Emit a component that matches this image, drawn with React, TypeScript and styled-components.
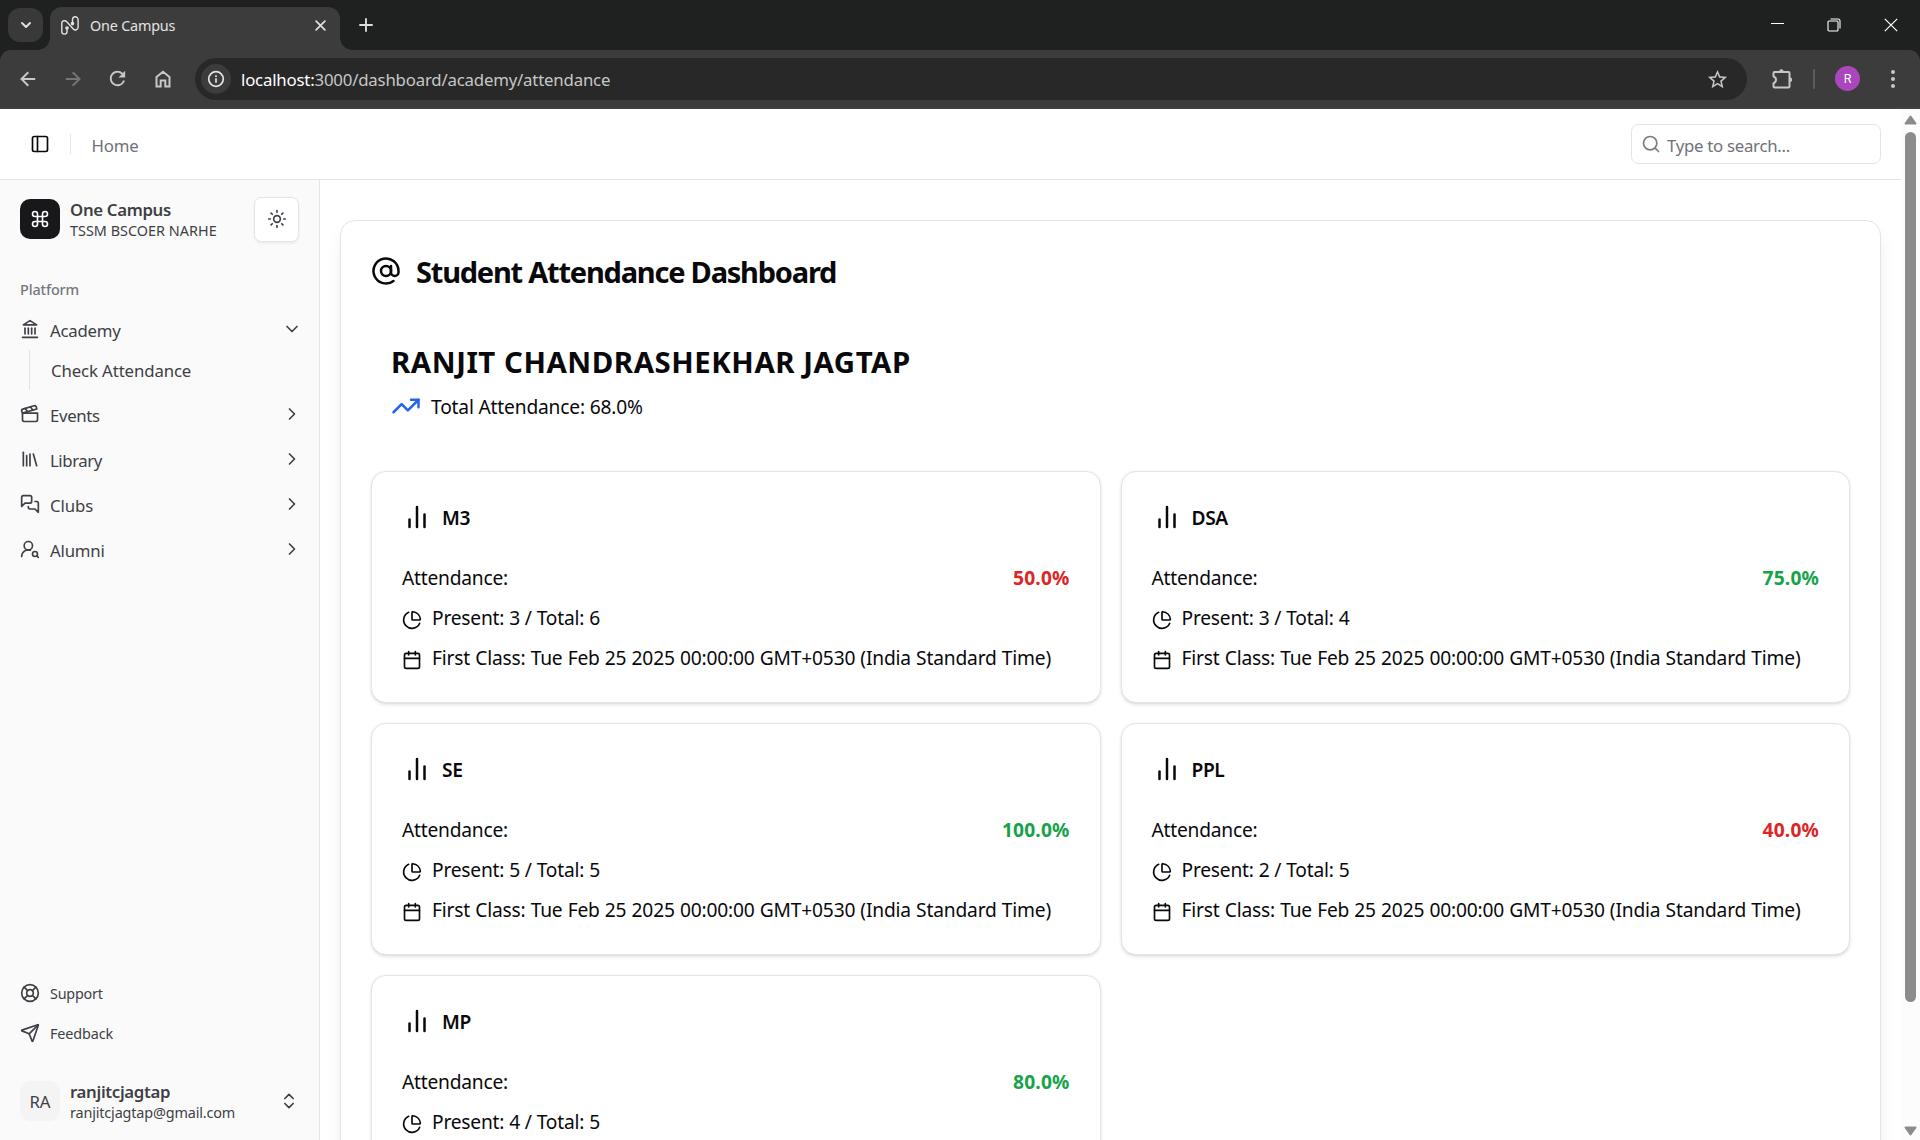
import React from "react";
import styled, { createGlobalStyle, css } from "styled-components";
import {
  AtSign,
  Calendar,
  ChartPie,
  ChevronDown,
  ChevronRight,
  ChevronsUpDown,
  Clapperboard,
  Command,
  Library,
  LifeBuoy,
  PanelLeft,
  Search,
  Send,
  Sun,
  TrendingUp,
  UserRoundSearch,
} from "lucide-react";
import { MdRefresh, MdStarBorder } from "react-icons/md";

const GlobalStyle = createGlobalStyle`
  *, *::before, *::after { box-sizing: border-box; }
  body {
    margin: 0;
    overflow: hidden;
    font-family: "Noto Sans", "Open Sans", sans-serif;
    color: #09090b;
    background: #fff;
  }
  svg { display: block; flex: none; }
`;

const border = "#e4e4e7";
const chromeDark = "#1f2120";
const chromeMid = "#3c3c3c";

/* ---------- browser window ---------- */

const Window = styled.div`
  width: 1920px;
  height: 1140px;
  display: flex;
  flex-direction: column;
  overflow: hidden;
`;

const TabStrip = styled.div`
  height: 50px;
  flex: none;
  display: flex;
  align-items: flex-start;
  padding: 0 0 0 8px;
  background: ${chromeDark};
  color: #dedede;
`;

const TabMenu = styled.div`
  width: 35px;
  height: 34px;
  margin: 8px 7px 0 0;
  border-radius: 12px;
  background: #383938;
  display: grid;
  place-items: center;
`;

const Tab = styled.div`
  position: relative;
  width: 290px;
  height: 43px;
  margin-top: 7px;
  padding: 0 12px 7px 11px;
  display: flex;
  align-items: center;
  border-radius: 12px 12px 0 0;
  background: ${chromeMid};

  &::before,
  &::after {
    content: "";
    position: absolute;
    bottom: 0;
    width: 12px;
    height: 12px;
  }
  &::before {
    left: -12px;
    background: radial-gradient(circle at 0 0, transparent 11.5px, ${chromeMid} 12px);
  }
  &::after {
    right: -12px;
    background: radial-gradient(circle at 100% 0, transparent 11.5px, ${chromeMid} 12px);
  }
`;

const TabTitle = styled.span`
  flex: 1;
  margin-left: 11px;
  padding-top: 1px;
  font-size: 14.4px;
  line-height: 20px;
  letter-spacing: -0.21px;
  color: #e3e3e3;
`;

const NewTab = styled.div`
  width: 30px;
  height: 50px;
  margin-left: 11px;
  display: grid;
  place-items: center;
`;

const WindowButtons = styled.div`
  margin-left: auto;
  display: flex;
  height: 50px;
`;

const WindowButton = styled.div<{ $w?: number }>`
  width: ${(p) => p.$w ?? 57}px;
  height: 49px;
  display: grid;
  place-items: center;
`;

const ToolbarBack = styled.div`
  flex: none;
  height: 59px;
  background: ${chromeDark};
`;

const Toolbar = styled.div`
  height: 59px;
  display: flex;
  align-items: center;
  padding: 0 0 1px 5px;
  border-radius: 11px 11px 0 0;
  background: ${chromeMid};
  box-shadow: inset 0 -2px 0 #414141;
  color: #c7c7c7;
`;

const ToolButton = styled.div<{ $dim?: boolean; $w?: number }>`
  width: ${(p) => p.$w ?? 45}px;
  flex: none;
  display: grid;
  place-items: center;
  padding-bottom: 1px;
  color: ${(p) => (p.$dim ? "#757575" : "#c7c7c7")};
`;

const AddressBar = styled.div`
  width: 1552px;
  flex: none;
  height: 42px;
  margin-left: 10px;
  padding: 0 18px 0 6px;
  display: flex;
  align-items: center;
  border-radius: 21px;
  background: #282828;
`;

const SiteInfo = styled.div`
  width: 30px;
  height: 30px;
  border-radius: 50%;
  background: ${chromeMid};
  display: grid;
  place-items: center;
  color: #e3e3e3;
`;

const Url = styled.span`
  flex: 1;
  padding: 2px 0 0 10px;
  font-size: 16.8px;
  line-height: 26px;
  letter-spacing: -0.19px;
  color: #c7c7c7;
  b {
    font-weight: 400;
    color: #fff;
  }
`;

const Divider = styled.span`
  width: 2px;
  height: 20px;
  margin: 0 20px 0 -3px;
  border-radius: 1px;
  background: #5c5c5c;
`;

const Profile = styled.div`
  width: 25px;
  height: 25px;
  margin: 0 auto 1px 0;
  border-radius: 50%;
  background: #ab47bc;
  color: #fff;
  font: 400 12.5px/25px Roboto, sans-serif;
  text-align: center;
`;

/* ---------- page ---------- */

const Viewport = styled.div`
  flex: 1;
  min-height: 0;
  display: flex;
`;

const Page = styled.div`
  width: 1901px;
  display: flex;
  flex-direction: column;
  overflow: hidden;
`;

const ScrollBar = styled.div`
  width: 19px;
  display: flex;
  flex-direction: column;
  align-items: center;
  padding: 6px 2px 4px 2px;
  background: #fcfcfc;
  color: #8b8b8b;
`;

const Thumb = styled.div`
  width: 11px;
  height: 870px;
  margin: 7px 0 auto;
  border-radius: 6px;
  background: #8b8b8b;
`;

const Header = styled.header`
  flex: none;
  height: 71px;
  display: flex;
  align-items: center;
  padding: 0 20px 0 30px;
  border-bottom: 1px solid ${border};
`;

const HeaderRule = styled.span`
  width: 1px;
  height: 20px;
  margin: 0 20.5px 0 20px;
  background: ${border};
`;

const Crumb = styled.span`
  padding-top: 3px;
  font-size: 16.8px;
  line-height: 24px;
  letter-spacing: -0.2px;
  color: #71717a;
`;

const SearchBox = styled.div`
  width: 250px;
  height: 40px;
  margin-left: auto;
  padding-left: 9px;
  display: flex;
  align-items: center;
  gap: 6px;
  border: 1px solid ${border};
  border-radius: 7.5px;
  color: #7b7b80;
  font-size: 16.8px;
  line-height: 24px;
  letter-spacing: -0.28px;
  span {
    padding-top: 3px;
    color: #71717a;
  }
`;

const Body = styled.div`
  flex: 1;
  min-height: 0;
  display: flex;
`;

const Sidebar = styled.aside`
  width: 320px;
  flex: none;
  display: flex;
  flex-direction: column;
  padding: 17px 20px 17px;
  border-right: 1px solid ${border};
  background: #fafafa;
  color: #3f3f46;
`;

const Identity = styled.div`
  display: flex;
  align-items: center;
  height: 44px;
`;

const Badge = styled.div<{ $dark?: boolean }>`
  width: 40px;
  height: 40px;
  border-radius: 10px;
  display: grid;
  place-items: center;
  font-size: 16.8px;
  line-height: 24px;
  ${(p) =>
    p.$dark
      ? css`
          background: #18181b;
          color: #fafafa;
        `
      : css`
          background: #f4f4f5;
          padding-top: 1px;
        `}
`;

const IdentityText = styled.div`
  flex: 1;
  display: flex;
  flex-direction: column;
  padding: 4px 0 0 10px;
`;

const IdentityName = styled.span`
  font-size: 16.8px;
  font-weight: 600;
  line-height: 20px;
  letter-spacing: -0.33px;
`;

const IdentityNote = styled.span<{ $ls: number }>`
  font-size: 14.4px;
  line-height: 22px;
  letter-spacing: ${(p) => p.$ls}px;
`;

const ThemeButton = styled.div`
  width: 45px;
  height: 45px;
  display: grid;
  place-items: center;
  border: 1px solid ${border};
  border-radius: 7.5px;
  background: #fff;
  box-shadow: 0 1.25px 2.5px rgba(0, 0, 0, 0.05);
`;

const GroupLabel = styled.div`
  height: 39px;
  margin: 28px 0 2px;
  padding-top: 1px;
  font-size: 14.4px;
  font-weight: 500;
  line-height: 39px;
  letter-spacing: -0.13px;
  color: #77777b;
`;

const Menu = styled.nav`
  display: flex;
  flex-direction: column;
  gap: 5px;
`;

const MenuRow = styled.div`
  height: 40px;
  display: flex;
  align-items: center;
  gap: 10px;
  padding-bottom: 2px;
`;

const MenuText = styled.span<{ $ls: number }>`
  flex: 1;
  padding-top: 3px;
  font-size: 16.8px;
  line-height: 24px;
  letter-spacing: ${(p) => p.$ls}px;
`;

const ChevronSlot = styled.span`
  margin-right: -3px;
`;

const SubMenu = styled.div`
  height: 40px;
  margin: -5px 0 0 9px;
  padding: 0 0 0 21px;
  border-left: 1.25px solid ${border};
  font-size: 16.8px;
  line-height: 41px;
  letter-spacing: -0.12px;
`;

const FooterLinks = styled.div`
  margin-top: auto;
  margin-bottom: 26px;
`;

const FooterLink = styled.div<{ $ls: number }>`
  height: 40px;
  display: flex;
  align-items: center;
  gap: 10px;
  font-size: 14.4px;
  line-height: 20px;
  letter-spacing: ${(p) => p.$ls}px;
  span {
    padding-top: 2px;
  }
`;

const Main = styled.main`
  flex: 1;
  min-width: 0;
  padding: 40px 20px 0;
`;

const Panel = styled.section`
  height: 1100px;
  padding: 30px;
  border: 1px solid ${border};
  border-radius: 15px;
  box-shadow: 0 12.5px 19px -4px rgba(0, 0, 0, 0.1), 0 5px 7.5px -5px rgba(0, 0, 0, 0.1);
`;

const PanelTitle = styled.h1`
  height: 40px;
  margin: 0 0 30px;
  display: flex;
  align-items: center;
  gap: 15px;
  font-size: 29px;
  font-weight: 700;
  line-height: 40px;
  letter-spacing: -1.22px;
  span {
    padding-top: 2px;
  }
`;

const Summary = styled.div`
  padding: 20px;
  margin-bottom: 30px;
`;

const StudentName = styled.h2`
  height: 40px;
  margin: 0 0 10px;
  padding-top: 1px;
  font-size: 29.4px;
  font-weight: 700;
  line-height: 40px;
  letter-spacing: 0.54px;
`;

const TotalRow = styled.div`
  height: 30px;
  display: flex;
  align-items: center;
  gap: 10px;
  font-size: 19.2px;
  line-height: 30px;
  letter-spacing: -0.18px;
  span {
    padding-top: 2px;
  }
`;

const Grid = styled.div`
  display: grid;
  grid-template-columns: 1fr 1fr;
  gap: 20px;
`;

const Card = styled.article`
  height: 232px;
  padding: 30px;
  border: 1px solid ${border};
  border-radius: 15px;
  background: #fff;
  box-shadow: 0 1.25px 3.75px rgba(0, 0, 0, 0.1), 0 1.25px 2.5px -1.25px rgba(0, 0, 0, 0.1);
`;

const CardTitle = styled.h3`
  height: 30px;
  margin: 0 0 30px;
  display: flex;
  align-items: center;
  gap: 10px;
  font-size: 19.2px;
  font-weight: 600;
  line-height: 30px;
  letter-spacing: -0.4px;
  span {
    padding-top: 2px;
  }
`;

const Line = styled.div<{ $ls?: number; $ws?: number }>`
  height: 30px;
  margin-bottom: 10px;
  display: flex;
  align-items: center;
  font-size: 19.2px;
  line-height: 30px;
  letter-spacing: ${(p) => p.$ls ?? -0.22}px;
  word-spacing: ${(p) => p.$ws ?? 0}px;
  white-space: nowrap;
  span {
    padding-top: 2px;
  }
  svg {
    margin: 6px 10px 0 0;
  }
`;

const Percent = styled.strong<{ $good: boolean }>`
  margin-left: auto;
  padding-top: 2px;
  letter-spacing: 0.16px;
  color: ${(p) => (p.$good ? "#16a34a" : "#dc2626")};
`;

/* ---------- drawings ---------- */

const Stroke = ({ size = 20, d, w = 2 }: { size?: number; d: string[]; w?: number }) => (
  <svg
    width={size}
    height={size}
    viewBox="0 0 24 24"
    fill="none"
    stroke="currentColor"
    strokeWidth={w}
    strokeLinecap="round"
    strokeLinejoin="round"
  >
    {d.map((p) => (
      <path key={p} d={p} />
    ))}
  </svg>
);

const Bars = () => <Stroke size={30} d={["M18 20V10", "M12 20V4", "M6 20v-6"]} />;
const Landmark = () => (
  <Stroke d={["M3 22h18", "M6 18v-7", "M10 18v-7", "M14 18v-7", "M18 18v-7", "m12 2 8 5H4Z"]} />
);
const Chats = () => (
  <Stroke
    d={[
      "M14 9a2 2 0 0 1-2 2H6l-4 4V4a2 2 0 0 1 2-2h8a2 2 0 0 1 2 2z",
      "M18 9h2a2 2 0 0 1 2 2v11l-4-4h-6a2 2 0 0 1-2-2v-1",
    ]}
  />
);

const Favicon = () => (
  <svg width="18" height="19" viewBox="0 0 18 19" fill="none" stroke="#e3e3e3" strokeWidth="1.4">
    <path d="M6 12v3.5a2.6 2.6 0 0 1-5.2 0V7C.8 4.5 4.3 4 6 6l6.3 7c1.6 1.7 4.8 1 4.8-1.8V3.6a2.8 2.8 0 0 0-5.6 0V7.5" />
    <circle cx="6" cy="12" r="1.1" fill="#e3e3e3" />
    <circle cx="11.5" cy="7.6" r="1.1" fill="#e3e3e3" />
  </svg>
);

const Arrow = ({ flip }: { flip?: boolean }) => (
  <svg width="20" height="20" viewBox="0 0 20 20" fill="none" stroke="currentColor" strokeWidth="2">
    <path d={flip ? "M2.8 10h13.6M9.7 3.2 16.5 10l-6.8 6.8" : "M17.2 10H3.6M10.3 3.2 3.5 10l6.8 6.8"} />
  </svg>
);

const House = () => (
  <svg width="20" height="20" viewBox="0 0 20 20" fill="none" stroke="currentColor" strokeWidth="2">
    <path d="M3.5 8 10 2.7 16.5 8v9.5h-4.2v-6H7.7v6H3.5z" />
  </svg>
);

const Info = () => (
  <svg width="18" height="18" viewBox="0 0 18 18" fill="none" stroke="currentColor" strokeWidth="1.7">
    <circle cx="9" cy="9" r="7.3" />
    <path d="M9 8.2v4.6M9 5.2v1.8" />
  </svg>
);

const Puzzle = () => (
  <svg width="22" height="22" viewBox="0 0 22 22" fill="none" stroke="currentColor" strokeWidth="2" strokeLinejoin="round">
    <path d="M3.5 4H17.5a1 1 0 0 1 1 1V18.5a1 1 0 0 1-1 1H3.5a1 1 0 0 1-1-1V15.2a3.5 3.5 0 0 0 0-6.7V5a1 1 0 0 1 1-1z" />
    <path d="M8.2 3.5a2.2 2.2 0 0 1 4.4 0zM19 9.6a2.2 2.2 0 0 1 0 4.4z" fill="currentColor" stroke="none" />
  </svg>
);

const Dots = () => (
  <svg width="6" height="20" viewBox="0 0 6 20" fill="currentColor">
    <circle cx="3" cy="3" r="2" />
    <circle cx="3" cy="10" r="2" />
    <circle cx="3" cy="17" r="2" />
  </svg>
);

const Triangle = ({ down }: { down?: boolean }) => (
  <svg width="13" height="10" viewBox="0 0 13 10" fill="currentColor" stroke="currentColor" strokeLinejoin="round" strokeWidth="2">
    <path d={down ? "M1.5 1.5h10L6.5 8.5z" : "M1.5 8.5h10L6.5 1.5z"} />
  </svg>
);

/* ---------- data ---------- */

const menu = [
  { label: "Academy", icon: <Landmark />, ls: -0.24, open: true },
  { label: "Events", icon: <Clapperboard size={20} />, ls: -0.35 },
  { label: "Library", icon: <Library size={20} />, ls: -0.42 },
  { label: "Clubs", icon: <Chats />, ls: -0.1 },
  { label: "Alumni", icon: <UserRoundSearch size={20} />, ls: -0.2 },
];

const start = "Tue Feb 25 2025 00:00:00 GMT+0530 (India Standard Time)";

const subjects = [
  { name: "M3", percent: 50, present: 3, total: 6, first: start },
  { name: "DSA", percent: 75, present: 3, total: 4, first: start },
  { name: "SE", percent: 100, present: 5, total: 5, first: start },
  { name: "PPL", percent: 40, present: 2, total: 5, first: start },
  { name: "MP", percent: 80, present: 4, total: 5 },
];

const Browser = () => (
  <>
    <TabStrip>
      <TabMenu>
        <Stroke size={16} w={3} d={["m6 9 6 6 6-6"]} />
      </TabMenu>
      <Tab>
        <Favicon />
        <TabTitle>One Campus</TabTitle>
        <Stroke size={15} w={2.8} d={["M5 5l14 14", "M19 5 5 19"]} />
      </Tab>
      <NewTab>
        <Stroke size={18} w={2.5} d={["M4 12h16", "M12 4v16"]} />
      </NewTab>
      <WindowButtons>
        <WindowButton>
          <svg width="13" height="14" stroke="#fff"><path d="M0 5.500h13" /></svg>
        </WindowButton>
        <WindowButton $w={55}>
          <svg width="14" height="14" fill="none" stroke="#fff" strokeWidth="1.1">
            <rect x="1" y="3" width="10" height="10" rx="1" />
            <path d="M3.5 1h7.5a2 2 0 0 1 2 2v7.5" />
          </svg>
        </WindowButton>
        <WindowButton $w={59}>
          <svg width="14" height="14" fill="none" stroke="#fff" strokeWidth="1.2">
            <path d="M.8.8l12.4 12.4M13.2.8.8 13.2" />
          </svg>
        </WindowButton>
      </WindowButtons>
    </TabStrip>
    <ToolbarBack>
      <Toolbar>
        <ToolButton><Arrow /></ToolButton>
        <ToolButton $dim><Arrow flip /></ToolButton>
        <ToolButton><MdRefresh size={23} /></ToolButton>
        <ToolButton><House /></ToolButton>
        <AddressBar>
          <SiteInfo><Info /></SiteInfo>
          <Url><b>localhost:</b>3000/dashboard/academy/attendance</Url>
          <MdStarBorder size={23} />
        </AddressBar>
        <ToolButton $w={69}><Puzzle /></ToolButton>
        <Divider />
        <Profile>R</Profile>
        <ToolButton $w={55}><Dots /></ToolButton>
      </Toolbar>
    </ToolbarBack>
  </>
);

export default function App() {
  return (
    <Window>
      <GlobalStyle />
      <Browser />
      <Viewport>
        <Page>
          <Header>
            <PanelLeft size={20} color="#09090b" />
            <HeaderRule />
            <Crumb>Home</Crumb>
            <SearchBox>
              <Search size={20} />
              <span>Type to search...</span>
            </SearchBox>
          </Header>
          <Body>
            <Sidebar>
              <Identity>
                <Badge $dark><Command size={20} /></Badge>
                <IdentityText>
                  <IdentityName>One Campus</IdentityName>
                  <IdentityNote $ls={0.02}>TSSM BSCOER NARHE</IdentityNote>
                </IdentityText>
                <ThemeButton><Sun size={20} /></ThemeButton>
              </Identity>
              <GroupLabel>Platform</GroupLabel>
              <Menu>
                {menu.map((m) => (
                  <React.Fragment key={m.label}>
                    <MenuRow>
                      {m.icon}
                      <MenuText $ls={m.ls}>{m.label}</MenuText>
                      <ChevronSlot>
                        {m.open ? <ChevronDown size={20} /> : <ChevronRight size={20} />}
                      </ChevronSlot>
                    </MenuRow>
                    {m.open && <SubMenu>Check Attendance</SubMenu>}
                  </React.Fragment>
                ))}
              </Menu>
              <FooterLinks>
                <FooterLink $ls={-0.22}><LifeBuoy size={20} /><span>Support</span></FooterLink>
                <FooterLink $ls={-0.13}><Send size={20} /><span>Feedback</span></FooterLink>
              </FooterLinks>
              <Identity>
                <Badge>RA</Badge>
                <IdentityText>
                  <IdentityName>ranjitcjagtap</IdentityName>
                  <IdentityNote $ls={-0.15}>ranjitcjagtap@gmail.com</IdentityNote>
                </IdentityText>
                <ChevronsUpDown size={20} />
              </Identity>
            </Sidebar>
            <Main>
              <Panel>
                <PanelTitle>
                  <AtSign size={30} />
                  <span>Student Attendance Dashboard</span>
                </PanelTitle>
                <Summary>
                  <StudentName>RANJIT CHANDRASHEKHAR JAGTAP</StudentName>
                  <TotalRow>
                    <TrendingUp size={30} color="#2563eb" />
                    <span>Total Attendance: 68.0%</span>
                  </TotalRow>
                </Summary>
                <Grid>
                  {subjects.map((s) => (
                    <Card key={s.name}>
                      <CardTitle><Bars /><span>{s.name}</span></CardTitle>
                      <Line>
                        <span>Attendance:</span>
                        <Percent $good={s.percent >= 75}>{s.percent.toFixed(1)}%</Percent>
                      </Line>
                      <Line $ls={-0.22} $ws={0.2}>
                        <ChartPie size={20} />
                        <span>Present: {s.present} / Total: {s.total}</span>
                      </Line>
                      {s.first && (
                        <Line $ls={-0.18} $ws={0.34}>
                          <Calendar size={20} />
                          <span>First Class: {s.first}</span>
                        </Line>
                      )}
                    </Card>
                  ))}
                </Grid>
              </Panel>
            </Main>
          </Body>
        </Page>
        <ScrollBar>
          <Triangle />
          <Thumb />
          <Triangle down />
        </ScrollBar>
      </Viewport>
    </Window>
  );
}
